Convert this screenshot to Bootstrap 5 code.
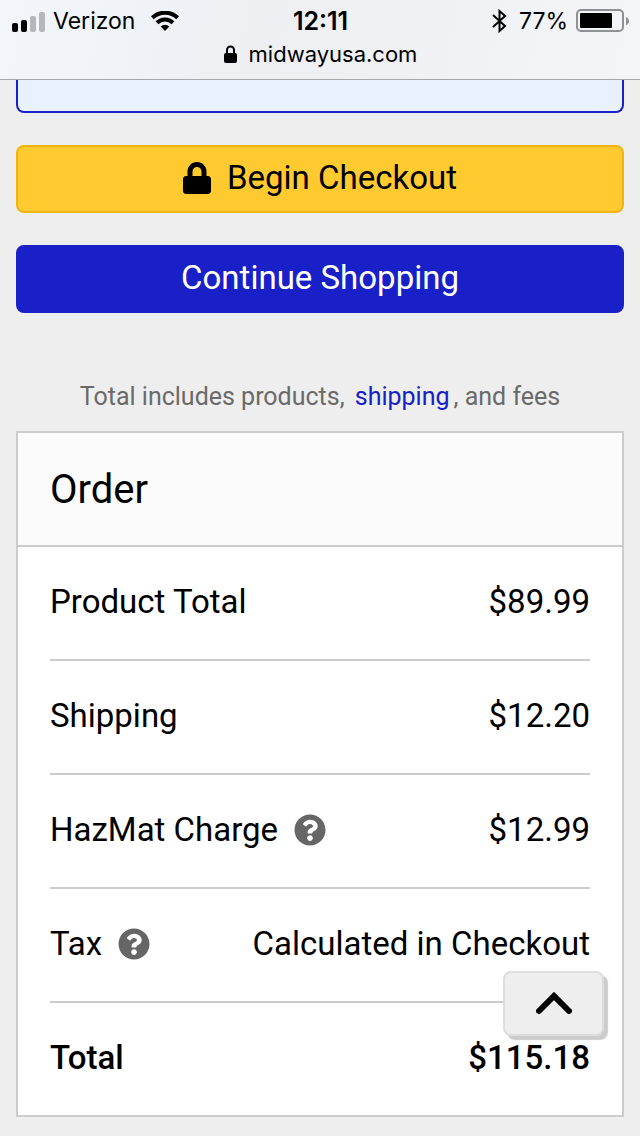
<!DOCTYPE html>
<html lang="en">
<head>
<meta charset="utf-8">
<meta name="viewport" content="width=device-width, initial-scale=1">
<title>Shopping Cart - midwayusa.com</title>
<link href="https://cdn.jsdelivr.net/npm/bootstrap@5.3.0/dist/css/bootstrap.min.css" rel="stylesheet">
<style>
  body { background: #eee; color: #000; font: 400 33px/48px Roboto, sans-serif; }
  .phone-bar { background: linear-gradient(100deg, #f2f6fb, #edeff3 40%, #eff1f5 65%, #f3f5f9); border-bottom: 1px solid #a4a7ab; font: 400 23px/32px Inter, sans-serif; padding: 5px 11px 8px 12px; }
  .phone-bar svg, .btn svg { display: block; flex: none; }
  .clock { font-size: 25px; font-weight: 600; }
  .address { font-size: 22px; line-height: 34px; }
  .notice-end { height: 33px; background: #eaf1fe; border: 2px solid #1a20c8; border-top: 0; border-radius: 0 0 8px 8px; }
  .actions { display: grid; gap: 32px; padding-top: 32px; }
  .action { height: 68px; font-size: 33px; line-height: 48px; border: 2px solid; border-radius: 8px; padding: 7px 16px 9px; }
  .action-buy, .action-buy:hover { background: #ffc930; border-color: #f0b40e; color: #000; }
  .action-shop, .action-shop:hover { background: #1a20c8; border-color: #1a20c8; color: #fff; }
  .fine-print { color: #6a6a6a; font-size: 25px; line-height: 36px; padding: 66px 0 16px; }
  .fine-print a { color: #1a20c8; }
  .order-card { border: 2px solid #ccc; border-radius: 0; background: #fff; }
  .order-head { background: #fbfbfb; border-bottom: 2px solid #ccc; padding: 33px 32px 31px; }
  .order-head h2 { font-size: 40px; line-height: 48px; font-weight: 400; margin: 0; }
  .order-body { padding: 0 32px; }
  .order-lines tr { padding: 31px 0 33px; }
  .order-lines tr:not(:last-child) { border-bottom: 2px solid #ccc; }
  .order-lines th, .order-lines td { font-weight: 400; padding: 0; line-height: 48px; }
  .order-lines tr:last-child > * { font-weight: 500; }
  .help, .help:hover { color: #666; }
  .to-top, .to-top:hover { width: 101px; height: 65px; right: 36px; bottom: 100px; background: #eee; color: #000; border: 2px solid #ddd; border-radius: 8px; box-shadow: 4px 4px 1px #ccc; }
</style>
</head>
<body>
<header class="phone-bar">
  <div class="row g-0">
    <div class="col d-flex align-items-center">
      <svg width="33" height="21" viewBox="0 0 33 21" aria-hidden="true">
        <rect y="12" width="6" height="9" rx="2"/><rect x="9" y="9" width="6" height="12" rx="2"/>
        <g fill="#b4b8bb"><rect x="18" y="5" width="6" height="16" rx="2"/><rect x="27" y="1" width="6" height="20" rx="2"/></g>
      </svg>
      <span class="ms-2">Verizon</span>
      <svg class="ms-3" width="28" height="20" viewBox="0 0 28 20" fill="none" stroke="#000" stroke-width="4" aria-hidden="true">
        <path d="M1.400 6.800a18 18 0 0 1 25.200 0M6 11.700a11.500 11.500 0 0 1 16 0"/>
        <path d="M14 20l-4.300-4.400a6.200 6.200 0 0 1 8.600 0z" fill="#000" stroke="none"/>
      </svg>
    </div>
    <div class="col-auto clock">12:11</div>
    <div class="col d-flex align-items-center justify-content-end">
      <svg width="15" height="24" viewBox="0 0 15 24" fill="none" stroke="#000" stroke-width="2" aria-hidden="true"><path d="M1 6l12 11-5.500 5V2L13 7 1 18"/></svg>
      <span class="ms-2 ps-1 me-2">77%</span>
      <svg width="53" height="24" viewBox="0 0 53 24" aria-hidden="true">
        <rect x="1" y="1" width="46" height="21" rx="4" fill="none" stroke="#8e9093" stroke-width="2"/>
        <rect x="4" y="4" width="32" height="15" rx="1"/><path d="M50 8q3 1 3 4t-3 4z" fill="#8e9093"/>
      </svg>
    </div>
  </div>
  <div class="address d-flex align-items-center justify-content-center">
    <svg width="13" height="18" viewBox="0 0 13 18" aria-hidden="true"><rect y="8" width="13" height="10" rx="2"/><path d="M3 9V5a3.500 3.500 0 0 1 7 0v4" fill="none" stroke="#000" stroke-width="2"/></svg>
    <span class="ms-2 ps-1">midwayusa.com</span>
  </div>
</header>

<main class="px-3 pb-3">
  <div class="notice-end"></div>
  <div class="actions">
    <button type="button" class="action action-buy btn d-flex align-items-center justify-content-center gap-3">
      <svg width="28" height="32" viewBox="0 0 448 512" fill="currentColor" aria-hidden="true"><path d="M400 224h-24v-72C376 68.200 307.800 0 224 0S72 68.200 72 152v72H48c-26.500 0-48 21.500-48 48v192c0 26.500 21.500 48 48 48h352c26.500 0 48-21.500 48-48V272c0-26.500-21.500-48-48-48zm-104 0H152v-72c0-39.700 32.300-72 72-72s72 32.300 72 72v72z"/></svg>
      <span>Begin Checkout</span>
    </button>
    <button type="button" class="action action-shop btn">Continue Shopping</button>
  </div>
  <p class="fine-print text-center mb-0">Total includes products, <a href="#" class="text-decoration-none mx-1">shipping</a>, and fees</p>

  <section class="card order-card">
    <div class="order-head"><h2>Order</h2></div>
    <div class="order-body">
      <table class="order-lines d-block">
        <tbody class="d-block">
          <tr class="d-flex justify-content-between"><th scope="row">Product Total</th><td>$89.99</td></tr>
          <tr class="d-flex justify-content-between"><th scope="row">Shipping</th><td>$12.20</td></tr>
          <tr class="d-flex justify-content-between">
            <th scope="row" class="d-flex align-items-center gap-3">HazMat Charge
              <button type="button" class="help btn border-0 p-0" aria-label="About the HazMat charge"><svg width="32" height="32" viewBox="0 0 512 512" fill="currentColor"><path id="help-mark" d="M504 256c0 136.997-111.043 248-248 248S8 392.997 8 256C8 119.083 119.043 8 256 8s248 111.083 248 248zM262.655 90c-54.497 0-89.255 22.957-116.549 63.758-3.536 5.286-2.353 12.415 2.715 16.258l34.699 26.310c5.205 3.947 12.621 3.008 16.665-2.122 17.864-22.658 30.113-35.797 57.303-35.797 20.429 0 45.698 13.148 45.698 32.958 0 14.976-12.363 22.667-32.534 33.976C247.128 238.528 216 254.941 216 296v4c0 6.627 5.373 12 12 12h56c6.627 0 12-5.373 12-12v-1.333c0-28.462 83.186-29.647 83.186-106.667 0-58.002-60.165-102-116.531-102zM256 338c-25.365 0-46 20.635-46 46 0 25.364 20.635 46 46 46s46-20.636 46-46c0-25.365-20.635-46-46-46z"/></svg></button></th>
            <td>$12.99</td>
          </tr>
          <tr class="d-flex justify-content-between">
            <th scope="row" class="d-flex align-items-center gap-3">Tax
              <button type="button" class="help btn border-0 p-0" aria-label="About tax"><svg width="32" height="32" viewBox="0 0 512 512" fill="currentColor"><use href="#help-mark"/></svg></button></th>
            <td>Calculated in Checkout</td>
          </tr>
          <tr class="d-flex justify-content-between"><th scope="row">Total</th><td>$115.18</td></tr>
        </tbody>
      </table>
    </div>
  </section>
</main>

<button type="button" class="to-top btn position-fixed d-flex align-items-center justify-content-center p-0" aria-label="Back to top">
  <svg width="36" height="24" viewBox="0 0 36 24" fill="none" stroke="currentColor" stroke-width="6" stroke-linecap="round" aria-hidden="true"><path d="M3 19L18 4l15 15"/></svg>
</button>
<script src="https://cdn.jsdelivr.net/npm/bootstrap@5.3.0/dist/js/bootstrap.bundle.min.js"></script>
</body>
</html>
